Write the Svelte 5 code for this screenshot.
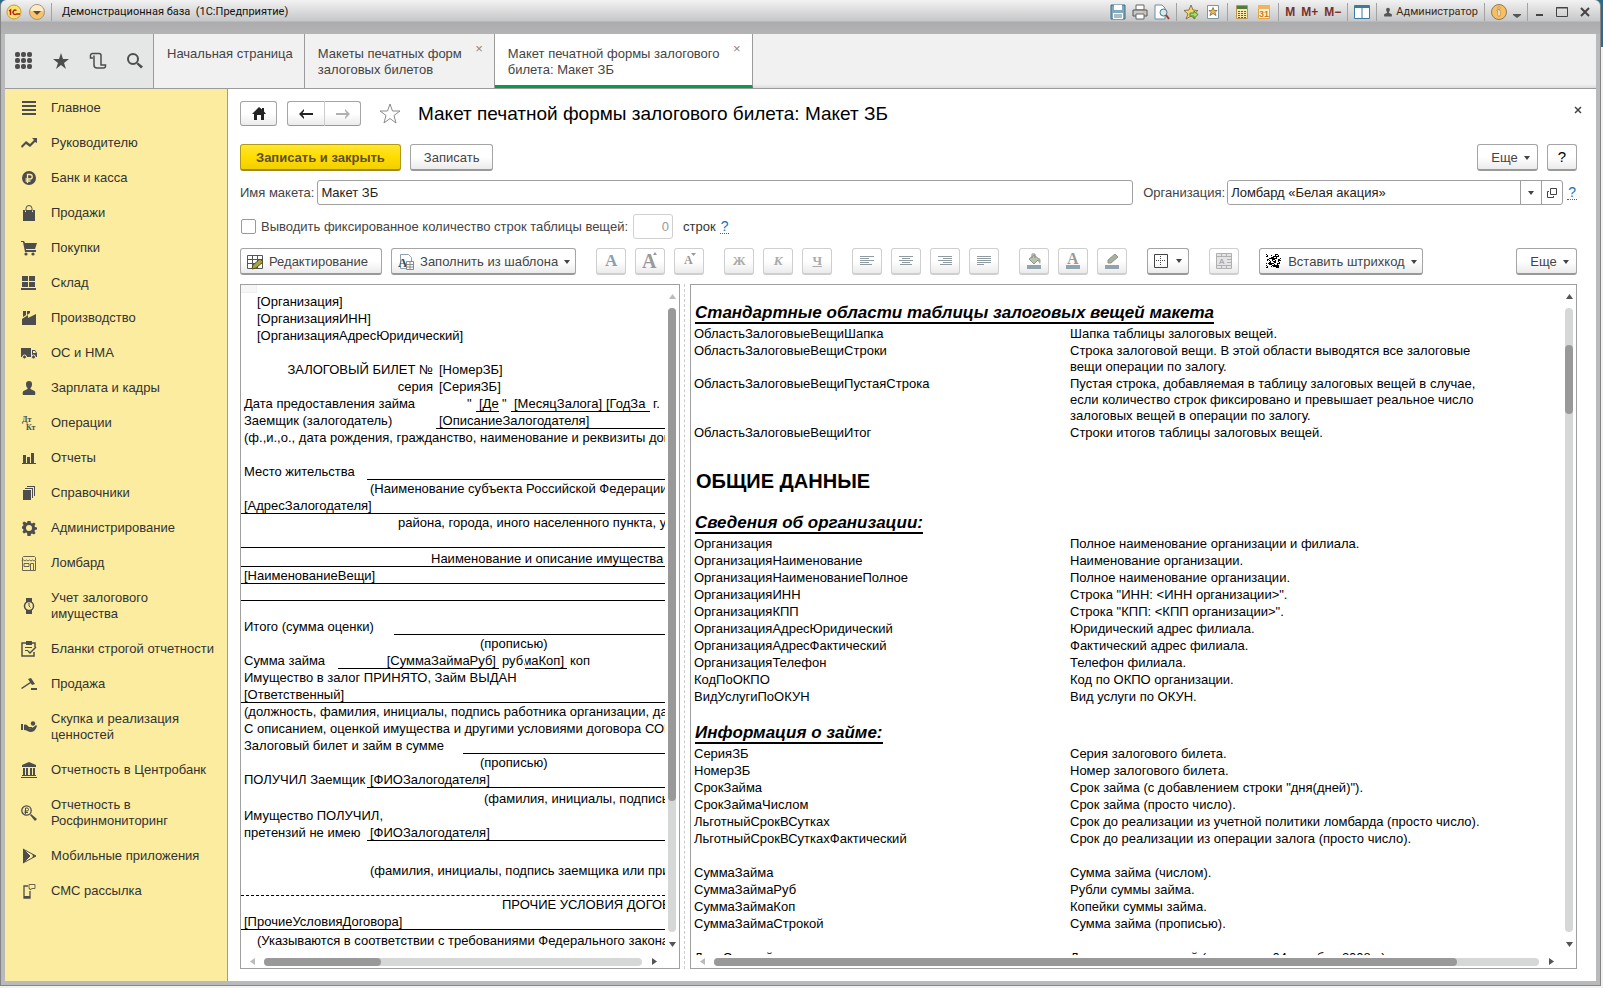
<script lang="ts">
	type Cell = { w?: number; text?: string; line?: boolean; right?: boolean };
	type Row = { h?: number; line?: 'solid' | 'dashed'; cells?: Cell[] };

	let templateName = $state('Макет ЗБ');
	let organization = $state('Ломбард «Белая акация»');
	let fixedRows = $state(false);
	let rowCount = $state('0');

	const icons: Record<string, string> = {
		menu: '<path d="M1 1h14v2H1zM1 5h14v2H1zM1 9h14v2H1zM1 13h14v2H1z"/>',
		trend: '<path d="M0 11l5-5 4 3 4-4-2-2h5v5l-2-1-5 5-4-3-4 4z"/>',
		ruble: '<circle cx="8" cy="8" r="7"/><path d="M6.500 13V4.500H9a2.200 2.200 0 0 1 0 4.500H4.500M4.500 11H9.500" fill="none" stroke="#fbec9f" stroke-width="1.300"/>',
		bag: '<path d="M2 5h2v2h1V5h6v2h1V5h2v11H2z"/><path d="M5 6V3.500a3 3 0 0 1 6 0V6" fill="none" stroke="#4d4d4d"/>',
		cart: '<path d="M0 1h3l1 2h12l-2 6H5v1h10v2H4L2 2H0z"/><circle cx="5" cy="14" r="1.600"/><circle cx="12" cy="14" r="1.600"/>',
		store: '<path d="M1 1h6v5H1zM8 1h6v5H8zM1 7h6v5H1zM8 7h6v5H8zM0 13h15v2H0z"/>',
		factory: '<path d="M2 1h3v4l-3 2zM6 1h3v2L6 5zM1 9l6-4v3l8-4v11H1z"/>',
		truck: '<path d="M0 3h10v9H0zM11 5h3l2 3v4h-5zM12 6v2h3l-1-2z" fill-rule="evenodd"/><circle cx="3.500" cy="12" r="2" stroke="#fbec9f"/><circle cx="12.500" cy="12" r="2" stroke="#fbec9f"/>',
		person: '<path d="M5 4a3 3 0 0 1 6 0c0 2-.5 3-1.500 4v1l4 2c1 1 1 2 .5 4H2c-.5-2-.5-3 .5-4l4-2V8C5.500 7 5 6 5 4z"/>',
		dtkt: '<text x="1" y="7" font-size="8" font-weight="bold" font-family="Liberation Serif, serif">Дт</text><text x="5" y="15" font-size="8" font-weight="bold" font-family="Liberation Serif, serif">Кт</text>',
		chart: '<path d="M1 13h14v1H1zM2 5h3v8H2zM6 7h3v6H6zM10 3h3v10h-3z"/>',
		books: '<path d="M2 5h8v10H2zM4 3h8v10h-1V4H4zM6 1h8v10h-1V2H6z"/>',
		gear: '<path fill-rule="evenodd" d="M6.500 1h3l.5 2 1 .5 2-1 1.500 1.500-1 2 .5 1 2 .5v2l-2 .5-.5 1 1 2-1.500 1.500-2-1-1 .5-.5 2h-3L6 13l-1-.5-2 1L1.500 12l1-2-.5-1-1-.5v-2L2 6l.5-1-1-2L3 1.500l2 1L6 3zM8 5a3 3 0 1 0 0 6 3 3 0 0 0 0-6z"/>',
		shop: '<path d="M1.500 5.500v10h13v-10M1.500 5V2.500l1-1h11l1 1V5l-1.500 1-1.500-1-1.500 1-1.500-1-1.500 1-1.500-1-1.500 1-1.500-1-1.500 1zM3 8.500h5v3H3zM9.500 15V8.500h3V15" fill="none" stroke="#6a6450"/>',
		watch: '<path d="M5 0h6v4H5zM5 12h6v4H5z"/><circle cx="8" cy="8" r="4.500" fill="#fbec9f" stroke="#4d4d4d" stroke-width="1.500"/><path d="M8 5v3l1.500 1.500" fill="none" stroke="#4d4d4d"/>',
		form: '<path d="M5 2H1v13h12v-4M10 2h4v4" fill="none" stroke="#4d4d4d" stroke-width="1.500"/><path d="M5 0h6v4H5zM4 6h7v1H4zM4 9h3v1H4z"/><path d="M7 10l2 2 6-6" fill="none" stroke="#4d4d4d" stroke-width="1.500"/>',
		gavel: '<path d="M0 12l9-6 1 1-9 6zM7 3l3-1 4 6-3 1zM10 12h6v2h-6z"/>',
		hand: '<path d="M0 5h2v6H0zM3 6c2-1 3 0 5 2h3v1H8c2 1 5-1 7-3l1 1c-1 3-3 6-6 6-3 0-4-2-7-2z"/><circle cx="12" cy="4.500" r="2.200"/>',
		bank: '<path d="M8 0l7 3v2H1V3zM2 6h2v7H2zM5 6h2v7H5zM9 6h2v7H9zM12 6h2v7h-2zM1 13h14v1H1zM0 15h16v1H0z"/>',
		search: '<circle cx="5.500" cy="5.500" r="4.700" fill="none" stroke="#4d4d4d" stroke-width="1.300"/><path d="M9 10l1-1 6 5-2 2z"/><path d="M4.500 9V3H6a1.500 1.500 0 0 1 0 3H3.500M3.500 7.500H7" fill="none" stroke="#4d4d4d"/>',
		play: '<path d="M2 1l7 7-7 7z"/><path d="M2 1l13 7-13 7 7-7z" fill="none" stroke="#4d4d4d"/><path d="M11 6l4 2-4 2 1-2z"/>',
		phone: '<path d="M7 3H3v12h6V8" fill="none" stroke="#4d4d4d" stroke-width="1.300"/><path d="M3 13h6v2H3z"/><path d="M8 1.500h6v4h-3L9 7V5.500H8z" fill="none" stroke="#6a6450"/>'
	};

	const sections = [
		{ icon: 'menu', title: 'Главное' },
		{ icon: 'trend', title: 'Руководителю' },
		{ icon: 'ruble', title: 'Банк и касса' },
		{ icon: 'bag', title: 'Продажи' },
		{ icon: 'cart', title: 'Покупки' },
		{ icon: 'store', title: 'Склад' },
		{ icon: 'factory', title: 'Производство' },
		{ icon: 'truck', title: 'ОС и НМА' },
		{ icon: 'person', title: 'Зарплата и кадры' },
		{ icon: 'dtkt', title: 'Операции' },
		{ icon: 'chart', title: 'Отчеты' },
		{ icon: 'books', title: 'Справочники' },
		{ icon: 'gear', title: 'Администрирование' },
		{ icon: 'shop', title: 'Ломбард' },
		{ icon: 'watch', title: 'Учет залогового\nимущества' },
		{ icon: 'form', title: 'Бланки строгой отчетности' },
		{ icon: 'gavel', title: 'Продажа' },
		{ icon: 'hand', title: 'Скупка и реализация\nценностей' },
		{ icon: 'bank', title: 'Отчетность в Центробанк' },
		{ icon: 'search', title: 'Отчетность в\nРосфинмониторинг' },
		{ icon: 'play', title: 'Мобильные приложения' },
		{ icon: 'phone', title: 'СМС рассылка' }
	];

	// column widths of the printed form, in pixels
	const rows: Row[] = [
		{ cells: [{ w: 13 }, { text: '[Организация]' }] },
		{ cells: [{ w: 13 }, { text: '[ОрганизацияИНН]' }] },
		{ cells: [{ w: 13 }, { text: '[ОрганизацияАдресЮридический]' }] },
		{},
		{ cells: [{ w: 195, text: 'ЗАЛОГОВЫЙ БИЛЕТ №', right: true }, { text: '[НомерЗБ]' }] },
		{ cells: [{ w: 195, text: 'серия', right: true }, { text: '[СерияЗБ]' }] },
		{
			cells: [
				{ w: 223, text: 'Дата предоставления займа' },
				{ w: 12, text: '"' },
				{ w: 23, text: '[Де', line: true },
				{ w: 12, text: '"' },
				{ w: 92, text: '[МесяцЗалога]', line: true },
				{ w: 47, text: '[ГодЗа', line: true },
				{ text: 'г.' }
			]
		},
		{ cells: [{ w: 195, text: 'Заемщик (залогодатель)' }, { text: '[ОписаниеЗалогодателя]', line: true }] },
		{ cells: [{ text: '(ф.,и.,о., дата рождения, гражданство, наименование и реквизиты документа' }] },
		{},
		{ cells: [{ w: 126, text: 'Место жительства' }, { line: true }] },
		{ cells: [{ w: 126 }, { text: '(Наименование субъекта Российской Федерации' }] },
		{ line: 'solid', cells: [{ text: '[АдресЗалогодателя]' }] },
		{ cells: [{ w: 154 }, { text: 'района, города, иного населенного пункта, улицы' }] },
		{ line: 'solid' },
		{ h: 19, line: 'solid', cells: [{ w: 187 }, { text: 'Наименование и описание имущества' }] },
		{ line: 'solid', cells: [{ text: '[НаименованиеВещи]' }] },
		{ line: 'solid' },
		{},
		{ cells: [{ w: 153, text: 'Итого (сумма оценки)' }, { line: true }] },
		{ cells: [{ w: 236 }, { text: '(прописью)' }] },
		{
			cells: [
				{ w: 97, text: 'Сумма займа' },
				{ w: 161, text: '[СуммаЗаймаРуб]', line: true, right: true },
				{ w: 26, text: 'руб.' },
				{ w: 42, text: 'маКоп]', line: true, right: true },
				{ text: 'коп' }
			]
		},
		{ cells: [{ text: 'Имущество в залог ПРИНЯТО, Займ ВЫДАН' }] },
		{ line: 'solid', cells: [{ text: '[Ответственный]' }] },
		{ cells: [{ text: '(должность, фамилия, инициалы, подпись работника организации, дата)' }] },
		{ cells: [{ text: 'С описанием, оценкой имущества и другими условиями договора СОГЛАСЕН' }] },
		{ cells: [{ w: 222, text: 'Залоговый билет и займ в сумме' }, { line: true }] },
		{ cells: [{ w: 236 }, { text: '(прописью)' }] },
		{ cells: [{ w: 126, text: 'ПОЛУЧИЛ Заемщик' }, { text: '[ФИОЗалогодателя]', line: true }] },
		{ h: 19, cells: [{ w: 240 }, { text: '(фамилия, инициалы, подпись заемщика)' }] },
		{ cells: [{ text: 'Имущество ПОЛУЧИЛ,' }] },
		{ cells: [{ w: 126, text: 'претензий не имею' }, { text: '[ФИОЗалогодателя]', line: true }] },
		{ h: 38, cells: [{ w: 126 }, { text: '(фамилия, инициалы, подпись заемщика или приобретателя)' }] },
		{ line: 'dashed' },
		{ cells: [{ w: 258 }, { text: 'ПРОЧИЕ УСЛОВИЯ ДОГОВОРА' }] },
		{ line: 'solid', cells: [{ text: '[ПрочиеУсловияДоговора]' }] },
		{ h: 19, cells: [{ w: 13 }, { text: '(Указываются в соответствии с требованиями Федерального закона' }] }
	];

	const areas = [
		['ОбластьЗалоговыеВещиШапка', 'Шапка таблицы залоговых вещей.'],
		['ОбластьЗалоговыеВещиСтроки', 'Строка залоговой вещи. В этой области выводятся все залоговые\nвещи операции по залогу.'],
		['ОбластьЗалоговыеВещиПустаяСтрока', 'Пустая строка, добавляемая в таблицу залоговых вещей в случае,\nесли количество строк фиксировано и превышает реальное число\nзалоговых вещей в операции по залогу.'],
		['ОбластьЗалоговыеВещиИтог', 'Строки итогов таблицы залоговых вещей.']
	];
	const company = [
		['Организация', 'Полное наименование организации и филиала.'],
		['ОрганизацияНаименование', 'Наименование организации.'],
		['ОрганизацияНаименованиеПолное', 'Полное наименование организации.'],
		['ОрганизацияИНН', 'Строка "ИНН: <ИНН организации>".'],
		['ОрганизацияКПП', 'Строка "КПП: <КПП организации>".'],
		['ОрганизацияАдресЮридический', 'Юридический адрес филиала.'],
		['ОрганизацияАдресФактический', 'Фактический адрес филиала.'],
		['ОрганизацияТелефон', 'Телефон филиала.'],
		['КодПоОКПО', 'Код по ОКПО организации.'],
		['ВидУслугиПоОКУН', 'Вид услуги по ОКУН.']
	];
	const loan = [
		['СерияЗБ', 'Серия залогового билета.'],
		['НомерЗБ', 'Номер залогового билета.'],
		['СрокЗайма', 'Срок займа (с добавлением строки "дня(дней)").'],
		['СрокЗаймаЧислом', 'Срок займа (просто число).'],
		['ЛьготныйСрокВСутках', 'Срок до реализации из учетной политики ломбарда (просто число).'],
		['ЛьготныйСрокВСуткахФактический', 'Срок до реализации из операции залога (просто число).'],
		['', ''],
		['СуммаЗайма', 'Сумма займа (числом).'],
		['СуммаЗаймаРуб', 'Рубли суммы займа.'],
		['СуммаЗаймаКоп', 'Копейки суммы займа.'],
		['СуммаЗаймаСтрокой', 'Сумма займа (прописью).'],
		['', ''],
		['ДатаСтрокой', 'Дата выдачи строкой (например, 04 октября 2008 г.)']
	];

	const aligns = [
		{ name: 'По левому краю', d: 'M1 3.500h14M1 5.500h9M1 7.500h14M1 9.500h9M1 11.500h12' },
		{ name: 'По центру', d: 'M1 3.500h14M4 5.500h8M1 7.500h14M4 9.500h8M2 11.500h12' },
		{ name: 'По правому краю', d: 'M1 3.500h14M6 5.500h9M1 7.500h14M6 9.500h9M3 11.500h12' },
		{ name: 'По ширине', d: 'M1 3.500h14M1 5.500h14M1 7.500h14M1 9.500h14M1 11.500h7' }
	];

	// dots of the barcode icon on a 16x16 grid
	const dots: number[][] = [];
	for (let y = 0; y < 15; y++) {
		for (let x = 0; x < 15; x++) {
			const far = Math.hypot(x - 8, y - 7);
			if ((x * x * 31 + y * y * 17 + x * y * 13 + x * 7) % 11 < (far < 6 ? 7 : 3)) dots.push([x, y]);
		}
	}
</script>

{#snippet caret()}
	<svg class="caret" width="6" height="4" viewBox="0 0 6 4"><path d="M0 0h6L3 4z" /></svg>
{/snippet}

{#snippet scroller(vertical: boolean, start: number, size: number, atStart: boolean)}
	<div class="scroller" class:vertical>
		<svg class:faded={atStart} width="23" height="23" viewBox="0 0 23 23">
			<path d={vertical ? 'M8 14h7l-3.500-5z' : 'M14 8v7l-5-3.500z'} />
		</svg>
		<div class="track">
			<div class="thumb" style={vertical ? `top: ${start}%; height: ${size}%` : `left: ${start}%; width: ${size}%`}></div>
		</div>
		<svg width="23" height="23" viewBox="0 0 23 23">
			<path d={vertical ? 'M8 10h7l-3.500 5z' : 'M10 8v7l5-3.500z'} />
		</svg>
	</div>
{/snippet}

{#snippet fieldTable(items: string[][])}
	<table>
		<tbody>
			{#each items as [name, about]}
				<tr><td class="name">{name}</td><td>{about}</td></tr>
			{/each}
		</tbody>
	</table>
{/snippet}

<div class="window">
	<header class="titlebar">
		<svg width="16" height="16" viewBox="0 0 16 16">
			<circle cx="8" cy="8" r="7" fill="#fbe26a" stroke="#c89a3c" />
			<path d="M3 7l1.500-1v5M10.500 6.500a2.200 2.200 0 1 0 0 3.500H14" fill="none" stroke="#b32018" stroke-width="1.500" />
		</svg>
		<svg class="drop" width="16" height="16" viewBox="0 0 16 16">
			<circle cx="8" cy="8" r="7.500" fill="#f7c46c" stroke="#a8937a" />
			<path d="M1.500 7a6.500 6 0 0 1 13 0z" fill="#fdebc8" />
			<path d="M4 7h8l-4 4z" fill="#5a4a38" />
		</svg>
		<i class="sep"></i>
		<span class="caption">Демонстрационная база  (1С:Предприятие)</span>
		<div class="tools">
			<svg width="16" height="16" viewBox="0 0 16 16">
				<path d="M1 1h14v14H1z" fill="#7fa9bd" stroke="#3f6f88" /><path d="M4 1h8v5H4zM3 9h10v6H3z" fill="#fff" /><path d="M4 11h8M4 13h8" stroke="#4f7d94" />
			</svg>
			<svg width="16" height="16" viewBox="0 0 16 16">
				<path d="M4 1h8v5H4z" fill="#fff" stroke="#666" /><path d="M1 6h14v6H1z" fill="#c9c9c9" stroke="#555" /><path d="M4 10h8v5H4z" fill="#fff" stroke="#666" /><path d="M11 8h2" stroke="#e8a33a" />
			</svg>
			<svg width="16" height="16" viewBox="0 0 16 16">
				<path d="M1 1h7l3 3v11H1z" fill="#fff" stroke="#6b8fa3" /><circle cx="9.500" cy="8.500" r="3.500" fill="#d6e8f0" stroke="#4d7488" /><path d="M12 11l3 4" stroke="#a13b2b" stroke-width="2" />
			</svg>
			<i class="sep"></i>
			<svg width="16" height="16" viewBox="0 0 16 16">
				<path d="M8 1l2 5 5 .5-4 3.500 1 5-4-3-5 3 2-5-4-3.500L6 6z" fill="#f6d56c" stroke="#8a7448" /><path d="M7 9h4V7l4 3.500-4 4V12H7z" fill="#a9d86c" stroke="#4c8a28" />
			</svg>
			<svg width="16" height="16" viewBox="0 0 16 16">
				<path d="M2.500 1.500h11v13h-11z" fill="#fff" stroke="#7b97a8" /><path d="M8 3.500l1.300 3H12L10 8.500l1 3-3-2-3 2 1-3-2-2h2.700z" fill="#f2b957" stroke="#70582c" stroke-width=".7" />
			</svg>
			<i class="sep"></i>
			<svg width="16" height="16" viewBox="0 0 16 16">
				<path d="M2.500 1.500h11v13h-11z" fill="#fbe8ae" stroke="#b99653" /><path d="M3 2h10v3H3z" fill="#4e7c3a" /><path d="M4 7.500h8M4 9.500h8M4 11.500h8M4 13.500h8" stroke="#7c5c24" stroke-dasharray="2 1" />
			</svg>
			<svg width="16" height="16" viewBox="0 0 16 16">
				<path d="M2.500 1.500h11v13h-11z" fill="#fff3d6" stroke="#e0a347" /><path d="M2 1h12v4H2z" fill="#f0b45c" /><text x="3" y="13" font-size="9" font-weight="bold" fill="#d07a1c" font-family="Liberation Sans, sans-serif">31</text>
			</svg>
			<i class="sep"></i>
			<b>M</b><b>M+</b><b>M−</b>
			<i class="sep"></i>
			<svg width="16" height="16" viewBox="0 0 16 16"><path d="M.5 1.500h15v13H.5zM8 2v12" fill="#fff" stroke="#3d7a9c" /><path d="M1 2h14v2H1z" fill="#3d7a9c" /></svg>
			<i class="sep"></i>
			<span class="user">
				<svg width="10" height="10" viewBox="0 0 16 16" fill="#555">{@html icons.person}</svg>
				Администратор
			</span>
			<i class="sep"></i>
			<svg width="16" height="16" viewBox="0 0 16 16">
				<circle cx="8" cy="8" r="7.500" fill="#f6bf62" stroke="#8e7a5a" /><path d="M7 3h2v2H7zM6 6h3v6H7V7H6z" fill="#fff" stroke="#8a6420" stroke-width=".5" />
			</svg>
			<svg width="8" height="16" viewBox="0 0 8 16"><path d="M0 10h8v1L4 14 0 11z" fill="#555" /></svg>
			<i class="sep"></i>
			<svg width="10" height="16" viewBox="0 0 10 16"><path d="M2 10h7v2H2z" fill="#444" /></svg>
			<svg class="wide" width="12" height="12" viewBox="0 0 12 12"><path d="M.5 1.500h11v9H.5zM0 2h12" fill="none" stroke="#444" /></svg>
			<svg class="wide" width="10" height="10" viewBox="0 0 10 10"><path d="M1 1l8 8M9 1L1 9" stroke="#444" stroke-width="2" /></svg>
		</div>
	</header>

	<div class="client">
		<nav class="tabs">
			<div class="quick">
				<svg width="18" height="18" viewBox="0 0 18 18">
					{#each [3, 9, 15] as cy}
						{#each [3, 9, 15] as cx}<rect x={cx - 3} y={cy - 3} width="5" height="5" rx="2" />{/each}
					{/each}
				</svg>
				<svg width="18" height="18" viewBox="0 0 18 18"><path d="M9 1l2 6h6l-5 4 2 6-5-4-5 4 2-6-5-4h6z" /></svg>
				<svg width="18" height="18" viewBox="0 0 18 18"><path d="M4 6H1.500V3.500a2 2 0 0 1 2-2H10a2 2 0 0 1 2 2V13h4.500v1a2 2 0 0 1-2 2H8a3 3 0 0 1-3-3V3.500" fill="none" stroke="#4d4d4d" stroke-width="1.500" /></svg>
				<svg width="18" height="18" viewBox="0 0 18 18"><circle cx="7" cy="7" r="5" fill="none" stroke="#4d4d4d" stroke-width="2" /><path d="M10.500 12l1.500-1.500 5 4-2 2z" /></svg>
			</div>
			<a class="tab" href="#start">Начальная страница</a>
			<a class="tab closable" href="#layouts">Макеты печатных форм<br />залоговых билетов<span class="x">×</span></a>
			<a class="tab closable active" href="#layout">Макет печатной формы залогового<br />билета: Макет ЗБ<span class="x">×</span></a>
		</nav>

		<div class="body">
			<aside>
				{#each sections as s}
					<a href="#{s.icon}">
						<svg width="16" height="16" viewBox="0 0 16 16">{@html icons[s.icon]}</svg>
						<span>{s.title}</span>
					</a>
				{/each}
			</aside>

			<main>
				<div class="heading">
					<button class="btn home" aria-label="Начальная страница">
						<svg width="14" height="13" viewBox="0 0 14 13"><path d="M7 0l3 2.500V1h2v3.500L14 7h-2v6H9V8H5v5H2V7H0z" fill="#222" /></svg>
					</button>
					<div class="history">
						<button class="btn" aria-label="Назад"><svg width="14" height="10" viewBox="0 0 14 10"><path d="M0 5l5-5v2L3.500 4H14v2H3.500L5 8v2z" fill="#222" /></svg></button>
						<button class="btn" aria-label="Вперед"><svg width="14" height="10" viewBox="0 0 14 10"><path d="M14 5L9 0v2l1.500 2H0v2h10.500L9 8v2z" fill="#b0b0b0" /></svg></button>
					</div>
					<svg class="fav" width="22" height="21" viewBox="0 0 22 21"><path d="M11 1l2.500 7H21l-6 4.500 2 7.500-6-4.500L5 20l2-7.500L1 8h7.500z" fill="#fff" stroke="#8a8a8a" /></svg>
					<h1>Макет печатной формы залогового билета: Макет ЗБ</h1>
					<button class="close" aria-label="Закрыть"><svg width="8" height="8" viewBox="0 0 8 8"><path d="M1 1l6 6M7 1L1 7" stroke="#444" stroke-width="1.500" /></svg></button>
				</div>

				<div class="line">
					<button class="btn primary">Записать и закрыть</button>
					<button class="btn">Записать</button>
					<button class="btn more push">Еще {@render caret()}</button>
					<button class="btn square dark">?</button>
				</div>

				<div class="line fields">
					<label for="name">Имя макета:</label>
					<input id="name" class="grow" type="text" bind:value={templateName} />
					<label class="org-label" for="org">Организация:</label>
					<div class="combo">
						<input id="org" type="text" bind:value={organization} />
						<button aria-label="Выбрать">{@render caret()}</button>
						<button aria-label="Открыть"><svg width="10" height="10" viewBox="0 0 10 10"><path d="M3.500.5h6v6h-6zM2 3.500H.5v6h6V8" fill="none" stroke="#444" /></svg></button>
					</div>
					<a class="hint" href="#org-help">?</a>
				</div>

				<div class="line fields">
					<input id="fixed" type="checkbox" bind:checked={fixedRows} />
					<label for="fixed">Выводить фиксированное количество строк таблицы вещей:</label>
					<input id="count" class="count" type="text" disabled={!fixedRows} bind:value={rowCount} />
					<label class="unit" for="count">строк</label>
					<a class="hint" href="#count-help">?</a>
				</div>

				<div class="line">
					<button class="btn icon">
						<svg width="16" height="16" viewBox="0 0 16 16"><path d="M.5 1.500h15v13H.5zM0 5.500h16M0 9.500h16M5.500 2v13M10.500 2v13" fill="#fff" stroke="#555" /><path d="M5 15l1-4 7-6 3 3-7 6z" fill="#a9a541" stroke="#56541c" /></svg>
						Редактирование
					</button>
					<button class="btn icon menu">
						<svg width="16" height="16" viewBox="0 0 16 16"><path d="M2.500.5h8l3 3v11h-11z" fill="#fff" stroke="#8ca0ae" /><text x="0" y="13" font-size="13" font-weight="bold" fill="#2c4f6c" font-family="Liberation Serif, serif">A</text><path d="M8.500 7.500h7v8h-7zM8 10.500h8M8 13h8M12 8v7" fill="#fff" stroke="#8a8a8a" /></svg>
						Заполнить из шаблона {@render caret()}
					</button>
					<button class="btn square group" disabled aria-label="Шрифт"><svg width="16" height="16" viewBox="0 0 16 16"><text class="g" x="2" y="13" font-size="17" fill="#8aa0ac">A</text></svg></button>
					<button class="btn square" disabled aria-label="Крупнее"><svg width="18" height="18" viewBox="0 0 18 18"><text class="g" x="1" y="16" font-size="20">A</text><path d="M12 3l2-3 2 3z" /></svg></button>
					<button class="btn square" disabled aria-label="Мельче"><svg width="16" height="16" viewBox="0 0 16 16"><text class="g" x="3" y="11" font-size="12">A</text><path d="M10 0h5l-2.500 3z" /></svg></button>
					<button class="btn square group serif" disabled>Ж</button>
					<button class="btn square serif italic" disabled>К</button>
					<button class="btn square serif under" disabled>Ч</button>
					{#each aligns as a, i}
						<button class="btn square" class:group={i === 0} disabled aria-label={a.name}>
							<svg width="16" height="16" viewBox="0 0 16 16"><path d={a.d} stroke="#8f9aa1" /></svg>
						</button>
					{/each}
					<button class="btn square group" disabled aria-label="Цвет фона"><svg width="16" height="16" viewBox="0 0 16 16"><path d="M3 6l5-4 5 4-5 5z" fill="#b9c0b0" stroke="#909888" /><path d="M6 5V1h3v4" fill="none" stroke="#888" /><path d="M12 5c3 0 3 3 2 6l-2-3z" fill="#a8a898" /><path d="M1 12h14v4H1z" fill="#93a3ad" /></svg></button>
					<button class="btn square" disabled aria-label="Цвет текста"><svg width="16" height="16" viewBox="0 0 16 16"><text class="g" x="2" y="11" font-size="16">A</text><path d="M1 12h14v4H1z" fill="#93a3ad" /></svg></button>
					<button class="btn square" disabled aria-label="Цвет рамки"><svg width="16" height="16" viewBox="0 0 16 16"><path d="M4 10V7l7-6 3 3-7 6z" fill="#a9b09f" stroke="#8f9588" /><path d="M1 12h14v4H1z" fill="#93a3ad" /></svg></button>
					<button class="btn borders group" aria-label="Границы"><svg width="14" height="14" viewBox="0 0 14 14"><path d="M.5.5h13v13H.5z" fill="none" stroke="#444" /><path d="M6.500 2v10M2 6.500h10" stroke="#444" stroke-dasharray="1 1" /></svg>{@render caret()}</button>
					<button class="btn square group" disabled aria-label="Объединить"><svg width="16" height="16" viewBox="0 0 16 16"><path d="M.5.5h15v15H.5zM0 3.500h16M0 12.500h16M5.500 0v4M10.500 0v4M5.500 12v4M10.500 12v4M11 6.500h5M11 9.500h5" fill="#e4e4e4" stroke="#b0b0b0" /><text x="3" y="11" font-size="8" fill="#8898a4" font-family="Liberation Sans, sans-serif">A</text></svg></button>
					<button class="btn icon menu group">
						<svg width="16" height="16" viewBox="0 0 16 16" shape-rendering="crispEdges">{#each dots as [x, y]}<rect {x} {y} width="1" height="1" fill="#000" />{/each}</svg>
						Вставить штрихкод {@render caret()}
					</button>
					<button class="btn more push">Еще {@render caret()}</button>
				</div>

				<div class="panes">
					<section class="pane">
						<div class="sheet">
							<div class="corner"></div>
							{#each rows as row}
								<div class="row {row.line ?? ''}" style="height: {row.h ?? 17}px">
									{#each row.cells ?? [] as cell}
										<span
											class="cell"
											class:lined={cell.line}
											class:right={cell.right}
											class:rest={!cell.w}
											style={cell.w ? `width: ${cell.w}px` : ''}>{cell.text ?? ''}</span>
									{/each}
								</div>
							{/each}
						</div>
						{@render scroller(true, 0, 79, true)}
						{@render scroller(false, 0, 31, true)}
					</section>
					<div class="splitter"></div>
					<section class="pane">
						<div class="sheet help">
							<h3>Стандартные области таблицы залоговых вещей макета</h3>
							{@render fieldTable(areas)}
							<h2>ОБЩИЕ ДАННЫЕ</h2>
							<h3>Сведения об организации:</h3>
							{@render fieldTable(company)}
							<h3 class="next">Информация о займе:</h3>
							{@render fieldTable(loan)}
						</div>
						{@render scroller(true, 6, 11, false)}
						{@render scroller(false, 0, 90, true)}
					</section>
				</div>
			</main>
		</div>
	</div>
</div>

<style>
	:global(body) {
		background: #f2f2f2 linear-gradient(#2f6a86, #2f6a86) 0 0 / 100% 47px no-repeat;
		font-family: 'Liberation Sans', Arial, sans-serif;
		font-size: 13px;
		line-height: 16px;
		color: #444;
	}

	* {
		box-sizing: border-box;
	}

	a {
		color: inherit;
		text-decoration: none;
	}

	button,
	input {
		font: inherit;
		color: inherit;
		margin: 0;
	}

	svg {
		flex: none;
		display: block;
	}

	.window {
		height: calc(100vh - 2px);
		margin-right: 2px;
		display: flex;
		flex-direction: column;
		padding: 0 4px 4px;
		background: #b9babb;
		border: 1px solid #858585;
		border-top: none;
		border-radius: 6px 6px 0 0;
	}

	.titlebar {
		flex: none;
		height: 34px;
		margin: 0 -4px;
		padding: 0 10px 10px 5px;
		display: flex;
		align-items: center;
		background: linear-gradient(#f2f2f2, #c6c7c8 21px, #acacae 22px, #b4b4b5);
		border-radius: 6px 6px 0 0;
	}

	.titlebar .drop {
		margin: 0 6px 0 7px;
	}

	.sep {
		width: 1px;
		height: 18px;
		background: #a2a2a2;
	}

	.caption {
		margin-left: 10px;
		font-family: Roboto, sans-serif;
		font-size: 11px;
		color: #111;
		white-space: pre;
	}

	.tools {
		margin-left: auto;
		display: flex;
		align-items: center;
		gap: 6px;
	}

	.tools b {
		font-size: 12px;
		color: #7a2f2a;
	}

	.tools .wide {
		margin-left: 6px;
	}

	.user {
		display: flex;
		align-items: center;
		gap: 3px;
		font-family: Roboto, sans-serif;
		font-size: 11px;
		color: #3f2a14;
	}

	.client {
		flex: 1;
		min-height: 0;
		display: flex;
		flex-direction: column;
		background: #fff;
	}

	.tabs {
		flex: none;
		display: flex;
		height: 55px;
		background: linear-gradient(#f1f1f1 50px, #dcdcdc);
		border-bottom: 1px solid #9b9b9b;
	}

	.quick {
		width: 149px;
		display: flex;
		align-items: center;
		gap: 19px;
		padding-left: 10px;
		background: #e5e6e6;
		border-right: 1px solid #9b9b9b;
		fill: #4d4d4d;
	}

	.tab {
		position: relative;
		padding: 12px 11px 0 13px;
		background: #f1f1f1;
		border-right: 1px solid #9b9b9b;
		white-space: nowrap;
	}

	.tab.closable {
		padding-right: 32px;
	}

	.tab.active {
		background: #fff;
		border-bottom: 3px solid #0c9a48;
	}

	.x {
		position: absolute;
		top: 7px;
		right: 11px;
		color: #888;
	}

	.body {
		flex: 1;
		min-height: 0;
		display: flex;
	}

	aside {
		flex: none;
		width: 223px;
		padding-top: 1px;
		background: #fbec9f;
		border-right: 1px solid #b9a520;
		color: #333;
	}

	aside a {
		display: flex;
		align-items: center;
		gap: 14px;
		padding: 10px 0 9px 16px;
		white-space: pre;
	}

	aside svg {
		fill: #4d4d4d;
	}

	main {
		flex: 1;
		min-width: 0;
		display: flex;
		flex-direction: column;
		gap: 9px;
		padding: 12px 19px 12px 12px;
	}

	.heading {
		display: flex;
		align-items: center;
		height: 25px;
		margin-bottom: 9px;
	}

	h1 {
		margin: 0 0 0 17px;
		font-size: 19px;
		line-height: 24px;
		font-weight: normal;
		color: #000;
	}

	.btn {
		display: flex;
		align-items: center;
		justify-content: center;
		height: 27px;
		padding: 1px 13px 0;
		background: linear-gradient(#fff 50%, #ebebeb);
		border: 1px solid #a5a5a5;
		border-bottom: 2px solid #999;
		border-radius: 3px;
		white-space: nowrap;
	}

	.btn:disabled {
		border-color: #cfcfcf;
		color: #aaa;
	}

	.home {
		width: 37px;
		height: 25px;
		padding: 0;
		border-bottom-width: 1px;
		margin-right: 10px;
	}

	.history {
		display: flex;
	}

	.history .btn {
		width: 37px;
		height: 25px;
		padding: 0;
		border-bottom-width: 1px;
	}

	.history .btn:first-child {
		border-right: none;
		border-radius: 3px 0 0 3px;
	}

	.history .btn:last-child {
		border-left-color: #ccc;
		border-radius: 0 3px 3px 0;
	}

	.fav {
		margin-left: 18px;
	}

	.close {
		margin: 0 -5px 0 auto;
		padding: 0 0 8px;
		border: none;
		background: none;
	}

	.line {
		display: flex;
		align-items: center;
		gap: 9px;
	}

	.primary {
		padding: 1px 15px 0;
		background: linear-gradient(#ffe632, #ffdc00 50%, #f2d000);
		border-color: #b09a1c;
		border-bottom-color: #9c8a28;
		font-weight: bold;
		color: #5c5030;
	}

	.more {
		width: 61px;
		gap: 6px;
		padding: 1px 6px 0 12px;
	}

	.push {
		margin-left: auto;
	}

	.square {
		width: 30px;
		padding: 0;
	}

	.dark {
		font-size: 15px;
		color: #000;
	}

	.group {
		margin-left: 11px;
	}

	.icon {
		gap: 6px;
		padding-left: 6px;
	}

	.menu {
		padding-right: 5px;
	}

	.caret {
		fill: #444;
	}

	.borders {
		width: 42px;
		gap: 8px;
		padding: 0;
	}

	.square svg {
		fill: #999;
	}

	.g {
		font-family: 'Liberation Serif', serif;
		font-weight: bold;
	}

	.serif {
		font-family: 'Liberation Serif', serif;
		font-weight: bold;
		font-size: 13px;
	}

	.italic {
		font-style: italic;
	}

	.under {
		text-decoration: underline;
	}

	.fields {
		height: 25px;
		gap: 0;
	}

	input[type='text'] {
		height: 25px;
		padding: 0 3px;
		border: 1px solid #a0a0a0;
		border-radius: 3px;
		background: #fff;
		color: #222;
	}

	.grow {
		flex: 1;
		min-width: 0;
		margin-left: 3px;
	}

	.org-label {
		margin: 0 2px 0 10px;
	}

	.combo {
		display: flex;
		width: 336px;
		height: 25px;
		border: 1px solid #a0a0a0;
		border-radius: 3px;
	}

	.combo input[type='text'] {
		flex: 1;
		min-width: 0;
		height: 23px;
		border: none;
	}

	.combo button {
		display: flex;
		align-items: center;
		justify-content: center;
		width: 21px;
		padding: 0;
		border: none;
		border-left: 1px solid #a0a0a0;
		background: none;
	}

	.hint {
		margin-left: 4px;
		line-height: 14px;
		padding: 0 1px;
		font-size: 14px;
		color: #1a72b8;
		border-bottom: 1px dotted #1a72b8;
	}

	input[type='checkbox'] {
		appearance: none;
		width: 15px;
		height: 15px;
		margin: 0 5px 0 1px;
		border: 1px solid #999;
		border-radius: 2px;
		background: #fff;
	}

	input.count {
		width: 40px;
		margin: 0 10px 0 5px;
		text-align: right;
		border-color: #d0d0d0;
		color: #999;
	}

	.unit {
		color: #333;
	}

	.panes {
		flex: 1;
		min-height: 0;
		display: grid;
		grid-template-columns: 440fr 10px 887fr;
	}

	.pane {
		min-width: 0;
		min-height: 0;
		display: grid;
		grid-template-columns: minmax(0, 1fr) 14px;
		grid-template-rows: minmax(0, 1fr) 13px;
		border: 1px solid #a0a0a0;
	}

	.splitter {
		width: 0;
		margin-left: 4px;
		border-left: 1px dashed #ccc;
	}

	.sheet {
		overflow: hidden;
		color: #000;
	}

	.corner {
		width: 16px;
		height: 8px;
		background: #f6f6f6;
		border: 1px solid #eee;
		border-width: 0 1px 1px 0;
	}

	.row {
		display: flex;
		align-items: flex-end;
		border-bottom: 0 solid #000;
	}

	.row.solid {
		border-bottom-width: 1px;
	}

	.row.dashed {
		border-bottom: 1px dashed #000;
	}

	.cell {
		flex: none;
		height: 17px;
		padding-left: 3px;
		line-height: 17px;
		white-space: nowrap;
		overflow: hidden;
	}

	.solid .cell {
		height: 16px;
	}

	.cell.rest {
		flex: 1;
	}

	.cell.lined {
		border-bottom: 1px solid #000;
	}

	.cell.right {
		display: flex;
		justify-content: flex-end;
		padding: 0 3px 0 0;
	}

	.help {
		padding-top: 19px;
	}

	h2 {
		margin: 27px 0 21px 5px;
		font-size: 20px;
		line-height: 24px;
	}

	h3 {
		width: max-content;
		margin: 0 0 2px 4px;
		font-size: 17px;
		line-height: 18px;
		font-style: italic;
		border-bottom: 2px solid #000;
	}

	h3.next {
		margin-top: 18px;
	}

	table {
		width: 100%;
		table-layout: fixed;
		border-collapse: collapse;
	}

	td {
		height: 17px;
		padding: 0 3px 1px;
		vertical-align: top;
		white-space: pre-line;
	}

	.name {
		width: 376px;
	}

	.scroller {
		display: flex;
		align-items: center;
		min-width: 0;
		min-height: 0;
	}

	.scroller svg {
		fill: #555;
	}

	.scroller svg.faded {
		fill: #bbb;
	}

	.vertical {
		flex-direction: column;
	}

	.track {
		position: relative;
		flex: 1;
		height: 8px;
		background: #d6d8d7;
		border-radius: 4px;
	}

	.vertical .track {
		width: 8px;
	}

	.thumb {
		position: absolute;
		top: 0;
		left: 0;
		width: 8px;
		height: 8px;
		background: #999;
		border-radius: 4px;
	}
</style>
